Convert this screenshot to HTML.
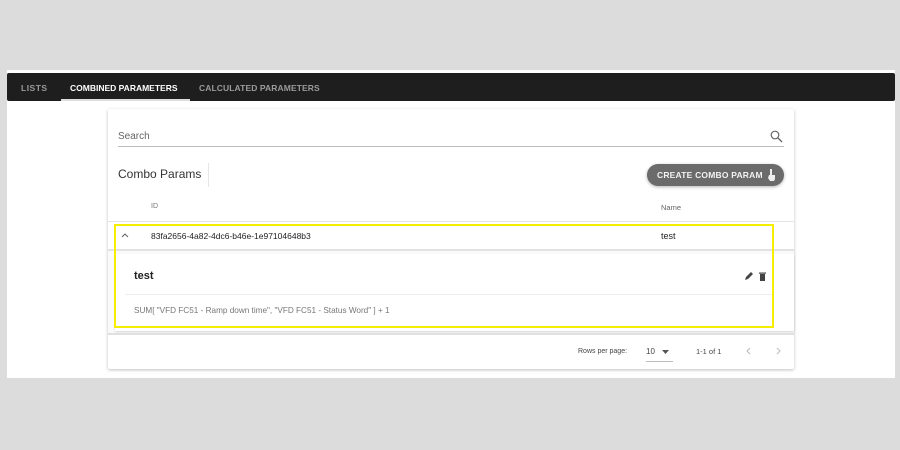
<!DOCTYPE html>
<html><head><style>
*{margin:0;padding:0;box-sizing:border-box}
body{width:900px;height:450px;background:#dcdcdc;font-family:"Liberation Sans",sans-serif;position:relative;overflow:hidden}
.a{position:absolute;white-space:nowrap}
</style></head><body>
<div class="a" style="left:7px;top:70px;width:888px;height:308px;background:#fff"></div>
<div class="a" style="left:7px;top:73px;width:888px;height:28px;background:#1e1e1e;border-radius:2px"></div>
<div class="a" style="left:21px;top:83px;font-size:8.5px;font-weight:bold;color:#9a9a9a;letter-spacing:.5px">LISTS</div>
<div class="a" style="left:70px;top:83px;font-size:8.5px;font-weight:bold;color:#fff;letter-spacing:0px">COMBINED PARAMETERS</div>
<div class="a" style="left:61px;top:99px;width:129px;height:2px;background:#ddd"></div>
<div class="a" style="left:199px;top:83px;font-size:8.5px;font-weight:bold;color:#9a9a9a;letter-spacing:.1px">CALCULATED PARAMETERS</div>

<div class="a" style="left:108px;top:109px;width:686px;height:260px;background:#fff;box-shadow:0 1px 3px rgba(0,0,0,.25);border-radius:2px"></div>
<div class="a" style="left:118px;top:131px;font-size:10px;color:#666">Search</div>
<div class="a" style="left:118px;top:146px;width:666px;height:1px;background:#bbb"></div>
<svg class="a" style="left:770px;top:130px" width="13" height="13" viewBox="0 0 13 13"><circle cx="5" cy="5" r="3.8" fill="none" stroke="#666" stroke-width="1.2"/><path d="M8 8l4 4" stroke="#666" stroke-width="1.3"/></svg>
<div class="a" style="left:118px;top:167px;font-size:12px;color:#333">Combo Params</div>
<div class="a" style="left:208px;top:163px;width:1px;height:24px;background:#e6e6e6"></div>
<div class="a" style="left:647px;top:164px;width:137px;height:22px;background:#6b6b6b;border-radius:11px;box-shadow:0 1px 3px rgba(0,0,0,.3)"></div>
<div class="a" style="left:657px;top:170px;font-size:8.5px;font-weight:bold;color:#f2f2f2;letter-spacing:.2px">CREATE COMBO PARAM</div>
<svg class="a" style="left:767px;top:169px" width="9" height="12" viewBox="0 0 9 12"><rect x="3" y="0" width="2" height="6" fill="#eee"/><path d="M2 6h6v4l-1 2H3L1 9z" fill="#eee"/></svg>
<div class="a" style="left:151px;top:203px;font-size:7px;color:#777">ID</div>
<div class="a" style="left:661px;top:203px;font-size:7.5px;color:#666">Name</div>
<div class="a" style="left:108px;top:221px;width:686px;height:1px;background:#e4e4e4"></div>
<svg class="a" style="left:121px;top:232px" width="8" height="6"><path d="M1 5l3-3 3 3" fill="none" stroke="#666" stroke-width="1.1"/></svg>
<div class="a" style="left:151px;top:231px;font-size:8.5px;color:#222">83fa2656-4a82-4dc6-b46e-1e97104648b3</div>
<div class="a" style="left:661px;top:231px;font-size:9px;color:#222">test</div>
<div class="a" style="left:108px;top:249px;width:686px;height:2px;background:#e2e2e2"></div>
<div class="a" style="left:108px;top:251px;width:686px;height:82px;background:#fafafa"></div>
<div class="a" style="left:115px;top:254px;width:679px;height:77px;background:#fff;box-shadow:0 1px 2px rgba(0,0,0,.15)"></div>
<div class="a" style="left:134px;top:270px;font-size:11px;font-weight:bold;color:#222">test</div>
<svg class="a" style="left:744px;top:272px" width="9" height="9"><path d="M1 8l1-3 5-5 2 2-5 5z" fill="#444"/></svg>
<svg class="a" style="left:759px;top:272px" width="7" height="9"><rect x="1" y="2" width="5" height="7" fill="#444"/><rect x="0" y="0.5" width="7" height="1.2" fill="#444"/></svg>
<div class="a" style="left:125px;top:294px;width:649px;height:1px;background:#eee"></div>
<div class="a" style="left:134px;top:306px;font-size:8.2px;color:#777">SUM[ "VFD FC51 - Ramp down time", "VFD FC51 - Status Word" ] + 1</div>
<div class="a" style="left:108px;top:333px;width:686px;height:2px;background:#e0e0e0"></div>
<div class="a" style="left:578px;top:348px;font-size:7px;color:#444">Rows per page:</div>
<div class="a" style="left:646px;top:347px;font-size:8px;color:#444">10</div>
<svg class="a" style="left:662px;top:350px" width="7" height="4"><path d="M0 0h7L3.5 4z" fill="#555"/></svg>
<div class="a" style="left:646px;top:361px;width:27px;height:1px;background:#bbb"></div>
<div class="a" style="left:696px;top:347px;font-size:7.5px;color:#444">1-1 of 1</div>
<svg class="a" style="left:746px;top:347px" width="5" height="8"><path d="M4 1L1 4l3 3" fill="none" stroke="#bbb" stroke-width="1"/></svg>
<svg class="a" style="left:776px;top:347px" width="5" height="8"><path d="M1 1l3 3-3 3" fill="none" stroke="#bbb" stroke-width="1"/></svg>
<div class="a" style="left:114px;top:224px;width:660px;height:104px;border:2px solid #f5ee00"></div>
</body></html>
